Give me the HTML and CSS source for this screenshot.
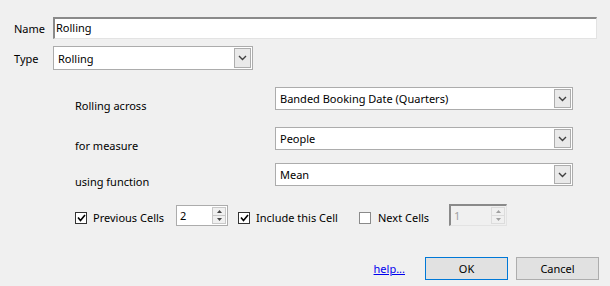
FILE: index.html
```html
<!DOCTYPE html>
<html lang="en">
<head>
    <meta charset="UTF-8">
    <title>Rolling</title>
    <link rel="stylesheet" href="styles.css">
</head>
<body>
    <div class="dialog">
        <!-- Name / Type -->
        <div class="field-row">
            <span class="field-label">Name</span>
            <div class="text-input">Rolling</div>
        </div>
        <div class="field-row type-row">
            <span class="field-label">Type</span>
            <div class="combo combo-type">
                <span class="combo-text">Rolling</span>
                <span class="combo-btn"><svg width="9" height="6" viewBox="0 0 9 6"><path d="M1 1 L4.5 4.5 L8 1" fill="none" stroke="#404040" stroke-width="1.4"/></svg></span>
            </div>
        </div>

        <!-- Rolling settings -->
        <div class="criteria">
            <div class="crit-row">
                <span class="crit-label">Rolling across</span>
                <div class="combo combo-wide">
                    <span class="combo-text">Banded Booking Date (Quarters)</span>
                    <span class="combo-btn"><svg width="9" height="6" viewBox="0 0 9 6"><path d="M1 1 L4.5 4.5 L8 1" fill="none" stroke="#404040" stroke-width="1.4"/></svg></span>
                </div>
            </div>
            <div class="crit-row row-measure">
                <span class="crit-label">for measure</span>
                <div class="combo combo-wide">
                    <span class="combo-text">People</span>
                    <span class="combo-btn"><svg width="9" height="6" viewBox="0 0 9 6"><path d="M1 1 L4.5 4.5 L8 1" fill="none" stroke="#404040" stroke-width="1.4"/></svg></span>
                </div>
            </div>
            <div class="crit-row row-function">
                <span class="crit-label">using function</span>
                <div class="combo combo-wide">
                    <span class="combo-text">Mean</span>
                    <span class="combo-btn"><svg width="9" height="6" viewBox="0 0 9 6"><path d="M1 1 L4.5 4.5 L8 1" fill="none" stroke="#404040" stroke-width="1.4"/></svg></span>
                </div>
            </div>
        </div>

        <!-- Cells -->
        <div class="cells-row">
            <span class="check checked"><svg width="9" height="8" viewBox="0 0 9 8"><path d="M1 3.5 L3.5 6.5 L8 1" fill="none" stroke="#000" stroke-width="1.6"/></svg></span>
            <span class="check-label prev-label">Previous Cells</span>
            <div class="spin">
                <span class="spin-text">2</span>
                <span class="spin-btns">
                    <span class="spin-btn"><svg width="5" height="3" viewBox="0 0 5 3"><path d="M0 3 L2.5 0 L5 3Z" fill="#444"/></svg></span>
                    <span class="spin-btn"><svg width="5" height="3" viewBox="0 0 5 3"><path d="M0 0 L2.5 3 L5 0Z" fill="#444"/></svg></span>
                </span>
            </div>
            <span class="check checked include-check"><svg width="9" height="8" viewBox="0 0 9 8"><path d="M1 3.5 L3.5 6.5 L8 1" fill="none" stroke="#000" stroke-width="1.6"/></svg></span>
            <span class="check-label include-label">Include this Cell</span>
            <span class="check next-check"></span>
            <span class="check-label next-label">Next Cells</span>
            <div class="spin spin-disabled">
                <span class="spin-text">1</span>
                <span class="spin-btns">
                    <span class="spin-btn"><svg width="5" height="3" viewBox="0 0 5 3"><path d="M0 3 L2.5 0 L5 3Z" fill="#a0a0a0"/></svg></span>
                    <span class="spin-btn"><svg width="5" height="3" viewBox="0 0 5 3"><path d="M0 0 L2.5 3 L5 0Z" fill="#a0a0a0"/></svg></span>
                </span>
            </div>
        </div>

        <!-- Footer -->
        <div class="footer">
            <a class="help-link" href="#">help...</a>
            <button class="btn btn-default">OK</button>
            <button class="btn">Cancel</button>
        </div>
    </div>
</body>
</html>
```

FILE: styles.css
```css
/* Global Styles */
body {
    margin: 0;
    background-color: #f0f0f0;
    font-family: 'Noto Sans', 'Open Sans', sans-serif;
    font-size: 11px;
    color: #000;
}

.dialog {
    width: 610px;
    height: 286px;
    padding-top: 17px;
    box-sizing: border-box;
    white-space: nowrap;
}

/* Name / Type */
.field-row {
    display: flex;
    align-items: center;
    padding-left: 14px;
}

.type-row {
    margin-top: 7px;
}

.field-label {
    width: 39px;
    flex-shrink: 0;
}

.text-input {
    width: 544px;
    height: 22px;
    box-sizing: border-box;
    background: #fff;
    border-top: 2px solid #8a8a8a;
    border-left: 2px solid #8a8a8a;
    border-right: 1px solid #e3e3e3;
    border-bottom: 1px solid #e3e3e3;
    padding-left: 1px;
    line-height: 18px;
}

/* Combo boxes */
.combo {
    display: flex;
    align-items: center;
    justify-content: space-between;
    flex-shrink: 0;
    height: 24px;
    box-sizing: border-box;
    background: #fff;
    border: 1px solid #acacac;
    padding: 1px;
}

.combo-type {
    width: 200px;
}

.combo-wide {
    width: 298px;
    height: 23px;
}

.combo-text {
    padding-left: 3px;
}

.combo-btn {
    display: flex;
    align-items: center;
    justify-content: center;
    width: 17px;
    height: 100%;
    box-sizing: border-box;
    border: 1px solid #adadad;
    background: #e9e9e9;
}

.criteria {
    margin-top: 17px;
    padding-left: 75px;
}

.crit-row {
    display: flex;
    align-items: flex-start;
    height: 23px;
}

.row-measure {
    margin-top: 17px;
}

.row-function {
    margin-top: 13px;
}

.crit-label {
    width: 200px;
    flex-shrink: 0;
    padding-top: 12px;
    line-height: 14px;
}

/* Cells row */
.cells-row {
    display: flex;
    align-items: center;
    margin-top: 18px;
    padding-left: 75px;
    height: 22px;
}

.check {
    display: flex;
    align-items: center;
    justify-content: center;
    flex-shrink: 0;
    width: 12px;
    height: 12px;
    box-sizing: border-box;
    background: #fff;
    border: 1px solid #333;
    margin-top: 6px;
}

.next-check {
    border-color: #8a8a8a;
}

.check-label {
    margin-left: 6px;
    flex-shrink: 0;
    padding-top: 5px;
}

.prev-label {
    width: 83px;
}

.include-check {
    margin-left: 10px;
}

.include-label {
    width: 103px;
}

.next-label {
    margin-left: 7px;
    width: 71px;
}

.spin {
    display: flex;
    flex-shrink: 0;
    width: 52px;
    height: 21px;
    box-sizing: border-box;
    background: #fff;
    border: 1px solid #acacac;
}

.spin-text {
    flex: 1;
    padding-left: 3px;
    line-height: 19px;
}

.spin-btns {
    display: flex;
    flex-direction: column;
    width: 14px;
    margin: 1px;
}

.spin-btn {
    flex: 1;
    display: flex;
    align-items: center;
    justify-content: center;
    background: #f0f0f0;
    border: 1px solid #c8c8c8;
}

.spin-btn + .spin-btn {
    border-top: none;
}

.spin-disabled {
    width: 58px;
    height: 22px;
    border-top: 2px solid #8a8a8a;
    border-left: 2px solid #8a8a8a;
    border-right: 1px solid #e3e3e3;
    border-bottom: 1px solid #e3e3e3;
    background: #f0f0f0;
    color: #a0a0a0;
}

.spin-disabled .spin-btn {
    border-color: #dcdcdc;
}

/* Footer */
.footer {
    display: flex;
    align-items: center;
    justify-content: flex-end;
    margin-top: 31px;
    padding-right: 11px;
}

.help-link {
    color: #0000ee;
    text-decoration: underline;
    margin-right: 20px;
}

.btn {
    width: 83px;
    height: 23px;
    margin-left: 8px;
    border: 1px solid #adadad;
    background: #e1e1e1;
    font-family: inherit;
    font-size: 11px;
    color: #000;
    padding: 0;
}

.btn-default {
    border-color: #0078d7;
    margin-left: 0;
}
```
